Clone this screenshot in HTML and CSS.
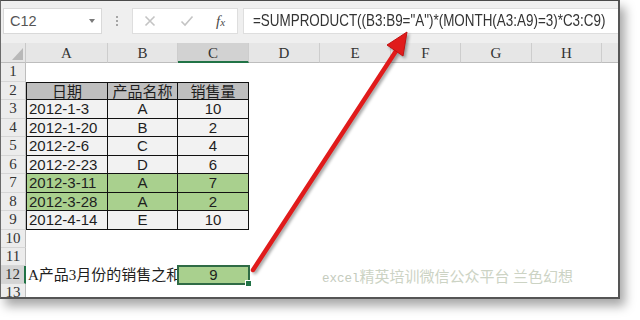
FILE: index.html
```html
<!DOCTYPE html>
<html>
<head>
<meta charset="utf-8">
<link rel="stylesheet" href="styles.css">
</head>
<body>
<div class="window">
  <div class="toolbar">
    <div class="namebox"><span class="name">C12</span><span class="caret"></span></div>
    <div class="grip"><i></i><i></i><i></i></div>
    <div class="fxbox">
      <svg class="ico" width="12" height="12" viewBox="0 0 12 12"><path d="M1.5 1.5 L10.5 10.5 M10.5 1.5 L1.5 10.5" stroke="#c4c4c4" stroke-width="1.6" fill="none"/></svg>
      <svg class="ico" width="14" height="12" viewBox="0 0 14 12"><path d="M1.5 6.5 L5 10 L12.5 1.5" stroke="#c4c4c4" stroke-width="1.6" fill="none"/></svg>
      <span class="fx">f<span class="fxx">x</span></span>
    </div>
    <div class="formula"><span class="ftext">=SUMPRODUCT((B3:B9="A")*(MONTH(A3:A9)=3)*C3:C9)</span></div>
  </div>
  <div class="sheet">
    <div class="corner"><svg width="11" height="12" viewBox="0 0 11 12"><polygon points="11,0 11,12 0,12" fill="#b8b8b8"/></svg></div>
    <div class="ch">A</div><div class="ch">B</div><div class="ch sel">C</div><div class="ch">D</div><div class="ch">E</div><div class="ch">F</div><div class="ch">G</div><div class="ch">H</div><div class="ch last"></div>

    <div class="rh">1</div><div class="blank"></div>

    <div class="rh">2</div><div class="t hd first">日期</div><div class="t hd">产品名称</div><div class="t hd">销售量</div><div class="rest"></div>
    <div class="rh">3</div><div class="t first">2012-1-3</div><div class="t c">A</div><div class="t c">10</div><div class="rest"></div>
    <div class="rh">4</div><div class="t first">2012-1-20</div><div class="t c">B</div><div class="t c">2</div><div class="rest"></div>
    <div class="rh">5</div><div class="t first">2012-2-6</div><div class="t c">C</div><div class="t c">4</div><div class="rest"></div>
    <div class="rh">6</div><div class="t first">2012-2-23</div><div class="t c">D</div><div class="t c">6</div><div class="rest"></div>
    <div class="rh">7</div><div class="t g first">2012-3-11</div><div class="t g c">A</div><div class="t g c">7</div><div class="rest"></div>
    <div class="rh">8</div><div class="t g first">2012-3-28</div><div class="t g c">A</div><div class="t g c">2</div><div class="rest"></div>
    <div class="rh">9</div><div class="t first">2012-4-14</div><div class="t c">E</div><div class="t c">10</div><div class="rest"></div>

    <div class="rh">10</div><div class="blank"></div>
    <div class="rh">11</div><div class="blank"></div>

    <div class="rh cur">12</div>
    <div class="label">A产品3月份的销售之和</div>
    <div class="active">9</div>
    <div class="cell"></div>
    <div class="mark"><span class="mono">excel</span>精英培训微信公众平台 兰色幻想</div>

    <div class="rh">13</div><div class="blank"></div>
  </div>
</div>
<svg class="arrow" width="640" height="320" viewBox="0 0 640 320">
  <g class="shadow">
    <line x1="253" y1="270" x2="396" y2="51" stroke="#e01b1b" stroke-width="4.5" stroke-linecap="round"/>
    <polygon points="407,32 403,56 387,45" fill="#e01b1b" stroke="#c01010" stroke-width="1"/>
  </g>
</svg>
</body>
</html>
```
FILE: styles.css
```css
html, body {
  margin: 0;
  padding: 0;
  background: #ffffff;
}
body {
  width: 640px;
  height: 320px;
  position: relative;
  overflow: hidden;
  font-family: "Liberation Sans", "Noto Sans CJK SC", sans-serif;
}
.window {
  width: 620px;
  height: 299px;
  box-sizing: border-box;
  border-top: 1px solid #4a4a4a;
  border-left: 1px solid #6a6a6a;
  border-right: 2px solid #555555;
  border-bottom: 2px solid #555555;
  overflow: hidden;
  box-shadow: 5px 7px 10px rgba(0, 0, 0, 0.35);
  background: #ffffff;
}
.toolbar {
  height: 42px;
  box-sizing: border-box;
  background: #efefef;
  display: flex;
  align-items: flex-start;
  padding: 7px 0 0 2px;
}
.namebox {
  width: 99px;
  height: 26px;
  box-sizing: border-box;
  background: #ffffff;
  border: 1px solid #d9d9d9;
  display: flex;
  align-items: center;
  justify-content: space-between;
  padding: 0 6px 0 6px;
}
.name {
  font-size: 14.5px;
  color: #555555;
}
.caret {
  width: 0;
  height: 0;
  border-left: 3px solid transparent;
  border-right: 3px solid transparent;
  border-top: 4px solid #7a7a7a;
}
.grip {
  width: 30px;
  height: 26px;
  display: flex;
  flex-direction: column;
  align-items: center;
  justify-content: center;
  gap: 2px;
}
.grip i {
  width: 2px;
  height: 2px;
  background: #a5a5a5;
}
.fxbox {
  width: 106px;
  height: 26px;
  box-sizing: border-box;
  background: #ffffff;
  border: 1px solid #dedede;
  display: flex;
  align-items: center;
  padding-left: 11px;
  gap: 24px;
}
.ico {
  display: block;
}
.fx {
  font-family: "Liberation Serif", serif;
  font-style: italic;
  font-size: 15px;
  color: #4a4a4a;
  margin-left: -2px;
}
.fxx {
  font-size: 11px;
}
.formula {
  flex: 1;
  margin-left: 5px;
  height: 26px;
  box-sizing: border-box;
  background: #ffffff;
  border: 1px solid #dedede;
  border-right: none;
  padding-left: 9px;
  line-height: 24px;
  white-space: nowrap;
  overflow: hidden;
}
.ftext {
  display: inline-block;
  font-family: "Liberation Sans", sans-serif;
  font-size: 17px;
  color: #333333;
  transform: scaleX(0.79);
  transform-origin: left center;
}
.sheet {
  display: grid;
  grid-template-columns: 25px 82px 70px 71px 71px 71px 70px 71px 70px 1fr;
  grid-template-rows: 20px repeat(10, 18.5px) repeat(3, 18px);
  background: #ffffff;
}
.corner {
  background: #e6e6e6;
  border-right: 1px solid #c9c9c9;
  border-bottom: 1px solid #bdbdbd;
  display: flex;
  align-items: flex-end;
  justify-content: flex-end;
  padding: 0 2px 2px 0;
}
.corner svg {
  display: block;
}
.ch {
  background: #e6e6e6;
  border-right: 1px solid #cdcdcd;
  border-bottom: 1px solid #bdbdbd;
  font-family: "Liberation Serif", serif;
  font-size: 15px;
  color: #333333;
  text-align: center;
  line-height: 21px;
}
.ch.sel {
  background: #d2d2d2;
  border-bottom: 2px solid #217346;
}
.ch.last {
  border-right: none;
}
.rh {
  background: #ececec;
  border-right: 1px solid #bdbdbd;
  border-bottom: 1px solid #d6d6d6;
  font-family: "Liberation Serif", serif;
  font-size: 15px;
  color: #333333;
  text-align: center;
  line-height: 17px;
}
.rh.cur {
  background: #d4d4d4;
  border-right: 2px solid #217346;
}
.blank {
  grid-column: span 9;
}
.rest {
  grid-column: span 6;
}
.cell {
  min-width: 0;
}
.t {
  background: #f2f2f2;
  border-right: 1px solid #111111;
  border-bottom: 1px solid #111111;
  font-size: 15px;
  line-height: 18px;
  color: #1e1e1e;
  padding: 0 2px;
  white-space: nowrap;
}
.t.first {
  border-left: 1px solid #111111;
}
.t.c {
  text-align: center;
}
.t.hd {
  background: #bfbfbf;
  border-top: 1px solid #111111;
  text-align: center;
  line-height: 17px;
}
.t.g {
  background: #a9d08e;
}
.label {
  grid-column: span 2;
  font-family: "Liberation Serif", "Noto Sans CJK SC", serif;
  font-size: 15px;
  line-height: 18px;
  color: #1e1e1e;
  padding-left: 2px;
  white-space: nowrap;
}
.active {
  position: relative;
  background: #a9d08e;
  outline: 2px solid #2f6b45;
  outline-offset: -1px;
  text-align: center;
  font-size: 15px;
  line-height: 18px;
  color: #1e1e1e;
}
.active::after {
  content: "";
  position: absolute;
  right: -3px;
  bottom: -3px;
  width: 5px;
  height: 5px;
  background: #217346;
  border: 1px solid #ffffff;
}
.mark {
  grid-column: span 5;
  padding-left: 2px;
  font-family: "Noto Sans CJK SC", sans-serif;
  font-size: 15px;
  line-height: 18px;
  color: #ccd3c4;
  white-space: nowrap;
  padding-top: 1px;
}
.mono {
  font-family: "Liberation Mono", monospace;
  font-size: 12.5px;
  color: #c4cbbd;
}
.arrow {
  position: absolute;
  left: 0;
  top: 0;
  pointer-events: none;
}
.shadow {
  filter: drop-shadow(2px 2px 1.5px rgba(0, 0, 0, 0.35));
}
```
